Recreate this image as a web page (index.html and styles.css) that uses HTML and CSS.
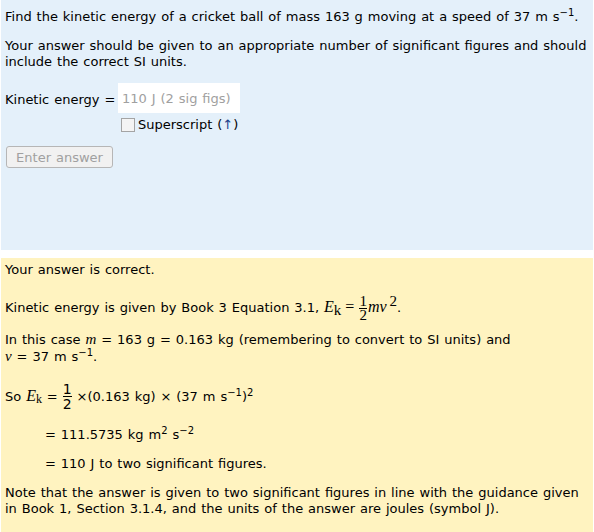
FILE: index.html
```html
<!DOCTYPE html>
<html>
<head>
<meta charset="utf-8">
<link rel="stylesheet" href="styles.css">
</head>
<body>
<div class="question">
  <p class="q1">Find the kinetic energy of a cricket ball of mass 163 g moving at a speed of 37 m s<sup>−1</sup>.</p>
  <p class="q2">Your answer should be given to an appropriate number of significant figures and should include the correct SI units.</p>
  <div class="answer-row">
    <span class="label">Kinetic energy =</span>
    <div class="answer-col">
      <div class="input">110 J (2 sig figs)</div>
      <label class="sup-row"><span class="checkbox"></span>Superscript (<span class="arrow">↑</span>)</label>
    </div>
  </div>
  <div class="btn-row"><span class="btn">Enter answer</span></div>
</div>
<div class="feedback">
  <p class="f1">Your answer is correct.</p>
  <p class="f2">Kinetic energy is given by Book 3 Equation 3.1, <span class="math"><i>E</i><sub class="ksub">k</sub> = <span class="frac mfrac"><span>1</span><span class="den">2</span></span><i>mv</i><sup class="msup">2</sup></span>.</p>
  <p class="f3">In this case <i class="mv">m</i> = 163 g = 0.163 kg (remembering to convert to SI units) and<br><i class="mv">v</i> = 37 m s<sup>−1</sup>.</p>
  <p class="f4">So <span class="mathek"><i>E</i><sub>k</sub></span> = <span class="frac sfrac"><span>1</span><span class="den">2</span></span> ×(0.163 kg) × (37 m s<sup>−1</sup>)<sup>2</sup></p>
  <p class="f5 indent">= 111.5735 kg m<sup>2</sup> s<sup>−2</sup></p>
  <p class="f6 indent">= 110 J to two significant figures.</p>
  <p class="f7">Note that the answer is given to two significant figures in line with the guidance given in Book 1, Section 3.1.4, and the units of the answer are joules (symbol J).</p>
</div>
</body>
</html>
```
FILE: styles.css
```css
html, body {
  margin: 0;
  padding: 0;
  background: #ffffff;
}
body {
  font-family: "DejaVu Sans", Verdana, sans-serif;
  font-size: 13px;
  line-height: 16px;
  word-spacing: 0.8px;
  color: #000000;
  padding-left: 1px;
  width: 592px;
}
p { margin: 0; }
sup {
  font-size: 10px;
  line-height: 0;
  vertical-align: 5px;
}
.question {
  background: #e4f0fa;
  height: 250px;
  padding: 9px 4px 0;
  box-sizing: border-box;
}
.q2 { margin-top: 13px; }
.answer-row {
  display: flex;
  margin-top: 13px;
  align-items: flex-start;
}
.label {
  margin-top: 9px;
  width: 113px;
}
.answer-col {
  display: flex;
  flex-direction: column;
}
.input {
  width: 118px;
  height: 30px;
  background: #ffffff;
  color: #a0a0a0;
  padding-left: 4px;
  line-height: 32px;
}
.sup-row {
  display: flex;
  align-items: center;
  margin-top: 4px;
  margin-left: 3px;
}
.checkbox {
  width: 12px;
  height: 12px;
  border: 1px solid #a4a4a4;
  background: #f4f4f4;
  margin-right: 3px;
  box-sizing: content-box;
}
.arrow { color: #1b3f8a; }
.btn-row {
  margin-top: 13px;
  margin-left: 1px;
}
.btn {
  display: inline-block;
  width: 105px;
  height: 20px;
  border: 1px solid #b6b6b6;
  border-radius: 3px;
  background: #f1f1f1;
  color: #a0a0a0;
  line-height: 21px;
  text-align: center;
}
.feedback {
  background: #fff3c0;
  margin-top: 8px;
  height: 274px;
  padding: 4px 4px 0;
  box-sizing: border-box;
}
.f2 { margin-top: 17px; }
.math { font-family: "Liberation Serif", "Times New Roman", serif; font-size: 16px; word-spacing: 0; }
.ksub { font-size: 15px; line-height: 0; vertical-align: -3px; }
.frac {
  display: inline-flex;
  flex-direction: column;
  align-items: center;
  vertical-align: middle;
}
.mfrac { font-size: 15px; line-height: 13px; padding: 0 1px; }
.mfrac .den { border-top: 1px solid #000; }
.msup { font-size: 15px; vertical-align: 6px; margin-left: 3px; }
.sfrac { font-size: 14px; line-height: 14px; margin-top: -2px; }
.sfrac .den { border-top: 1px solid #000; }
.mathek { font-family: "Liberation Serif", "Times New Roman", serif; font-size: 16px; }
.mathek sub { font-size: 12px; line-height: 0; vertical-align: -2px; }
.mv { font-family: "Liberation Serif", "Times New Roman", serif; font-size: 15px; }
.f3 { margin-top: 9px; }
.f4 { margin-top: 19px; }
.f5 { margin-top: 16px; }
.f6 { margin-top: 13px; }
.f7 { margin-top: 13px; }
.indent { padding-left: 40px; }
```
